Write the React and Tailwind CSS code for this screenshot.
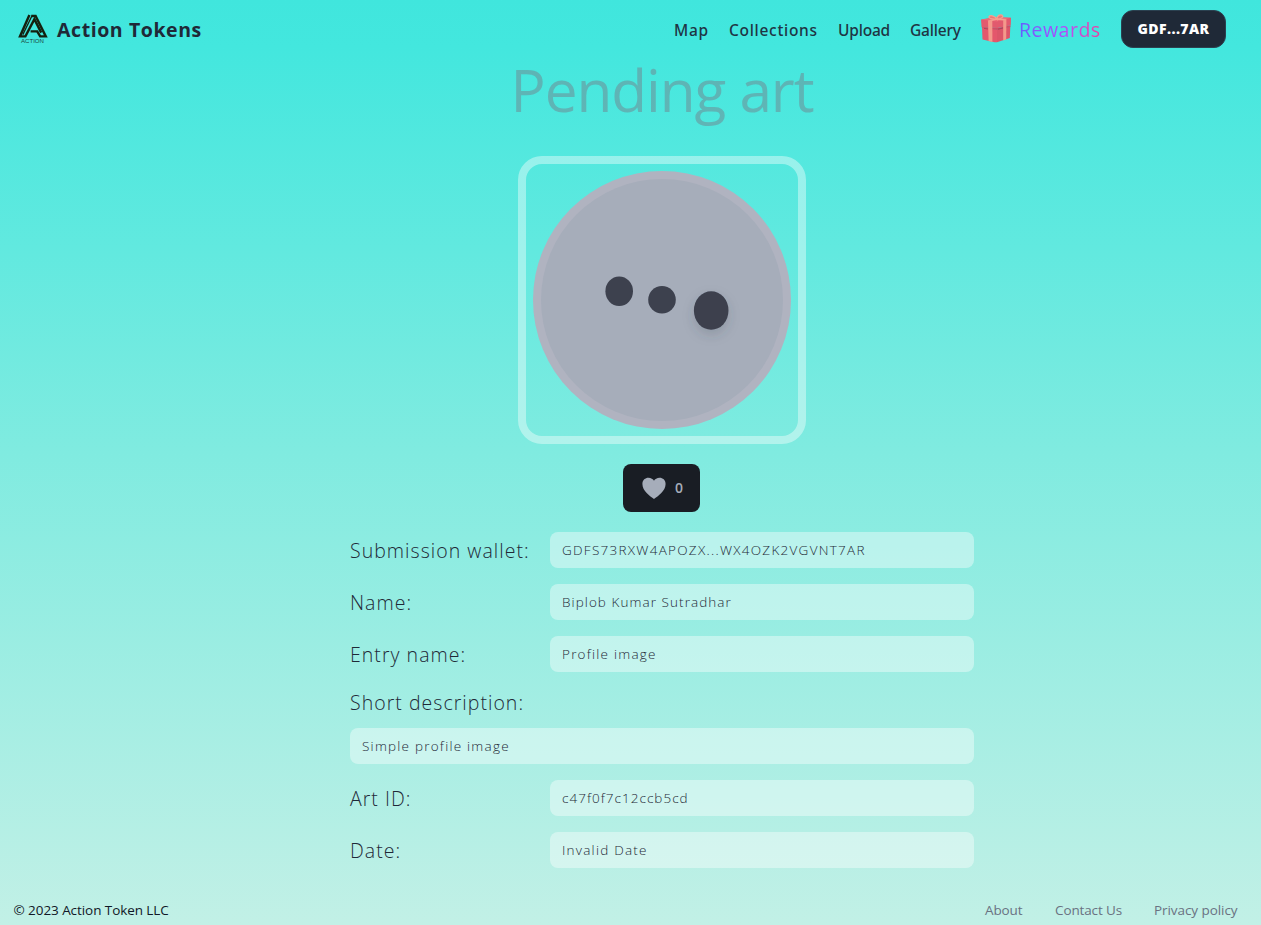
import React from "react";

function Logo() {
  return (
    <svg className="h-[30px] w-[31px] shrink-0" viewBox="0 0 31 30">
      <g fill="none" stroke="#14210f" strokeWidth="2.4" strokeLinejoin="miter">
        <path d="M12.4 .9 L3 22.4 H8.4 L17.4 5.2 L24.2 18.6" />
        <path d="M15.4 1 L5.8 20.6" strokeWidth="1.3" />
        <path d="M14.4 2 H18.6 L28.8 22.4 H23.2 L20.2 17.4 H13.6" />
      </g>
      <text x="4" y="29.2" fontSize="5.6" textLength="23" lengthAdjust="spacingAndGlyphs" fill="#1b4a3c" fontFamily="Liberation Sans, sans-serif">ACTION</text>
    </svg>
  );
}

function Gift() {
  return (
    <svg className="h-[30px] w-[32px] shrink-0" viewBox="0 0 32 30">
      <path d="M2 13 L17 15.5 V28.3 L14.5 28.3 L2.5 25.5 Z" fill="#e4576c" />
      <path d="M17 15.5 L30.3 12.5 L29.8 24 L17 28.3 Z" fill="#dc5569" />
      <path d="M1 5.6 L16 3.5 L31 3.8 L30.8 11.2 L17.5 14 L1.6 13.2 Z" fill="#e25a6e" />
      <path d="M2 13.1 L17.5 13.9 L30.5 11.3 V13 L17 16 L2 13.6 Z" fill="#cf4f66" />
      <path d="M1 5.6 L16 3 L31 3.8 L17 7.4 Z" fill="#ec6a78" />
      <path d="M8 6.4 L12.3 6.8 L12.4 28 L8.6 27 Z" fill="#f3998b" />
      <path d="M23.2 5.8 L26.4 5 L26.2 25.6 L23.2 26.6 Z" fill="#f3998b" />
      <path d="M7.5 6.4 L17 4.3 L26.5 5 L23 6.4 L17 5.8 L12 7 Z" fill="#f3a18f" />
      <path d="M17 5 C12 5.5 8.5 4.5 9 2.6 C10 .8 14.5 1.5 17 5 C17 1.4 20 .2 22 1.2 C24.5 2.8 21 5 17 5" fill="#e97a78" stroke="#f3a18f" strokeWidth="1.3" />
      <path d="M4 14.4 l4 .6 M18 15.2 l5 -1.2" stroke="#a33c55" strokeWidth=".8" />
    </svg>
  );
}

const field = "flex h-9 items-center rounded-lg bg-white/40 px-3 text-[13.5px] font-light text-[#1f2937]";
const label = "w-[200px] shrink-0 whitespace-nowrap text-[19.5px] font-light leading-7 tracking-[1.03px] text-[#1f2937]";

function Row({ name, value, valueClass }) {
  return (
    <div className="flex h-9 items-center">
      <div className={`${label} pt-[2px]`}>{name}</div>
      <div className={`${field} ${valueClass} w-[424px]`}>{value}</div>
    </div>
  );
}

export default function App() {
  return (
    <div className="flex h-[925px] w-full flex-col overflow-hidden bg-[linear-gradient(to_bottom,#40e6dd_0%,#43e7de_5%,#80ebe0_49%,#c2f0e6_100%)] font-['Open_Sans',sans-serif] whitespace-nowrap">
      <header className="flex h-[58px] shrink-0 items-center justify-between pl-[17px] pr-[35px]">
        <div className="flex items-center gap-[9px]">
          <Logo />
          <span className="pt-[2px] text-[19.5px] font-bold leading-7 tracking-[0.58px] text-[#1f2937]">Action Tokens</span>
        </div>
        <nav className="flex items-center text-[15.5px] leading-6 text-[#1f3544]">
          <div className="flex gap-5 pt-px font-['Noto_Sans',sans-serif] font-medium">
            <a className="w-[35px] tracking-[0.7px]">Map</a>
            <a className="w-[89px] tracking-[0.7px]">Collections</a>
            <a className="w-[52px] tracking-[-0.2px]">Upload</a>
            <a className="mr-[19px] w-[51px] tracking-[-0.2px]">Gallery</a>
          </div>
          <Gift />
          <a className="ml-[7px] mr-5 w-[82px] bg-gradient-to-r from-indigo-500 via-purple-500 to-pink-500 bg-clip-text pt-[2px] text-[19.5px] font-normal leading-7 tracking-[0.5px] text-transparent">Rewards</a>
          <button className="flex h-[38px] w-[105px] items-center justify-center rounded-xl border border-[#2b4150] bg-[#1f2937] text-[14px] font-extrabold tracking-[0.4px] text-white">GDF...7AR</button>
        </nav>
      </header>

      <main className="flex shrink-0 flex-col items-center pl-[63px]">
        <h1 className="flex h-[60px] items-center pt-[2px] text-[58.5px] font-normal leading-[60px] tracking-[-1.05px] text-[#6f8b93]/55">Pending art</h1>
        <div className="mt-[38px] flex h-[288px] w-[288px] items-center justify-center rounded-[24px] border-8 border-white/40">
          <svg className="h-[260px] w-[260px]" viewBox="532 170 260 260">
            <defs>
              <filter id="dotShadow" x="-60%" y="-60%" width="220%" height="220%">
                <feDropShadow dx="0" dy="5" stdDeviation="6" floodColor="#3d414e" floodOpacity=".2" />
              </filter>
            </defs>
            <circle cx="662" cy="300" r="129" fill="#b0b3c0" />
            <circle cx="662" cy="300" r="121" fill="#a6adba" />
            <g fill="#3d414e">
              <ellipse cx="619.2" cy="291.3" rx="13.8" ry="14.8" />
              <ellipse cx="662" cy="299.7" rx="13.8" ry="13.8" />
              <ellipse cx="711.2" cy="310.5" rx="17.3" ry="19.3" filter="url(#dotShadow)" />
            </g>
          </svg>
        </div>
        <button className="mt-5 mr-px flex h-12 w-[77px] items-center rounded-lg bg-[#191d24] pl-[19px] text-[14px] font-semibold text-[#a6adba]">
          <svg className="h-[23px] w-6" viewBox="0 0 24 23" fill="#a6adba">
            <path d="M12 22 C8 19 .4 14 .4 7 C.4 3 3.3 .8 6.4 .8 C9 .8 11 2.3 12 3.7 C13 2.3 15 .8 17.6 .8 C20.7 .8 23.6 3 23.6 7 C23.6 14 16 19 12 22 Z" />
          </svg>
          <span className="ml-[9px] pb-px">0</span>
        </button>

        <section className="mt-5 flex w-[624px] flex-col gap-4">
          <Row name="Submission wallet:" value="GDFS73RXW4APOZX...WX4OZK2VGVNT7AR" valueClass="tracking-[1.28px]" />
          <Row name="Name:" value="Biplob Kumar Sutradhar" valueClass="tracking-[1.07px]" />
          <Row name="Entry name:" value="Profile image" valueClass="tracking-[1.23px]" />
          <div className="flex flex-col gap-[11px] pt-px">
            <div className={label}>Short description:</div>
            <div className={`${field} tracking-[1.23px]`}>Simple profile image</div>
          </div>
          <Row name="Art ID:" value="c47f0f7c12ccb5cd" valueClass="tracking-[1.03px]" />
          <Row name="Date:" value="Invalid Date" valueClass="tracking-[1.22px]" />
        </section>
      </main>

      <footer className="mt-auto flex h-[30px] shrink-0 items-center justify-between pl-[13.5px] pr-[23px] text-[13.5px]">
        <span className="tracking-[-0.07px] text-[#111827]">© 2023 Action Token LLC</span>
        <div className="flex gap-8 text-gray-500">
          <a className="w-[38px] tracking-[-0.1px]">About</a>
          <a className="w-[67px] tracking-[-0.12px]">Contact Us</a>
          <a className="w-[84px] tracking-[-0.07px]">Privacy policy</a>
        </div>
      </footer>
    </div>
  );
}
